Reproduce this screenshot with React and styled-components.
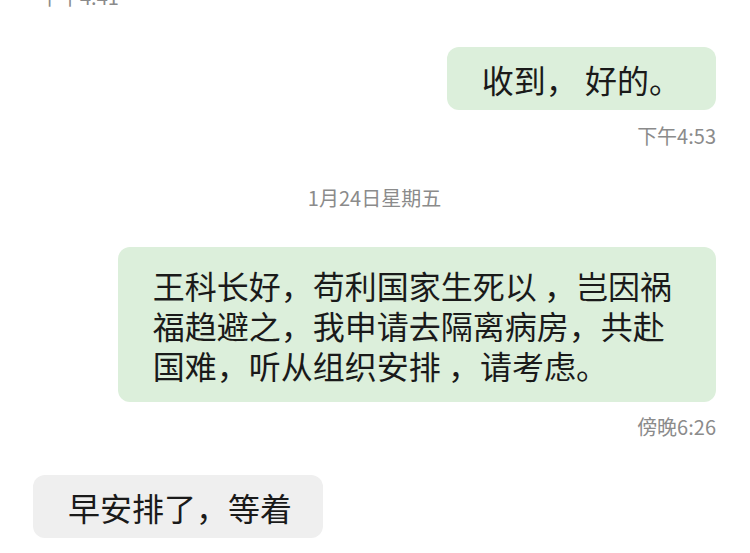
import React from 'react'
import styled, { createGlobalStyle } from 'styled-components'

const GlobalStyle = createGlobalStyle`
    html, body {
        margin: 0;
        padding: 0;
        background: #ffffff;
        overflow: hidden;
    }
    body {
        font-family: "Noto Sans CJK SC", "Noto Sans", sans-serif;
    }
`

const Chat = styled.div`
    width: 750px;
    height: 553px;
    overflow: hidden;
    display: flex;
    flex-direction: column;
    padding: 0 34px 0 33px;
    box-sizing: border-box;
`

const Row = styled.div`
    display: flex;
    justify-content: ${props => props.align === 'right' ? 'flex-end' : props.align === 'center' ? 'center' : 'flex-start'};
    margin-top: ${props => props.top || 0}px;
`

const Stamp = styled.span`
    font-size: 20px;
    line-height: 24px;
    color: #8b8b8b;
    padding-left: ${props => props.indent || 0}px;
`

const Bubble = styled.div`
    background: ${props => props.mine ? '#dcefdb' : '#efefef'};
    border-radius: 12px;
    color: #1a1a1a;
    font-size: 32px;
    line-height: 40px;
    text-align: left;
    padding: ${props => props.pad};
    white-space: nowrap;
`

const Line = styled.div`
    display: block;
`

const App = () => (
    <React.Fragment>
        <GlobalStyle />
        <Chat>
            <Row top={-15}>
                <Stamp indent={7}>下午4:41</Stamp>
            </Row>
            <Row align="right" top={38}>
                <Bubble mine pad="12px 35px 11px 35px">收到， 好的。</Bubble>
            </Row>
            <Row align="right" top={14}>
                <Stamp>下午4:53</Stamp>
            </Row>
            <Row align="center" top={38}>
                <Stamp>1月24日星期五</Stamp>
            </Row>
            <Row align="right" top={37}>
                <Bubble mine pad="18px 44px 17px 35px">
                    <Line>王科长好，苟利国家生死以 ，岂因祸</Line>
                    <Line>福趋避之，我申请去隔离病房，共赴</Line>
                    <Line>国难，听从组织安排 ，请考虑。</Line>
                </Bubble>
            </Row>
            <Row align="right" top={13}>
                <Stamp>傍晚6:26</Stamp>
            </Row>
            <Row top={36}>
                <Bubble pad="12px 31px 11px 35px">早安排了，等着</Bubble>
            </Row>
        </Chat>
    </React.Fragment>
)

export default App
